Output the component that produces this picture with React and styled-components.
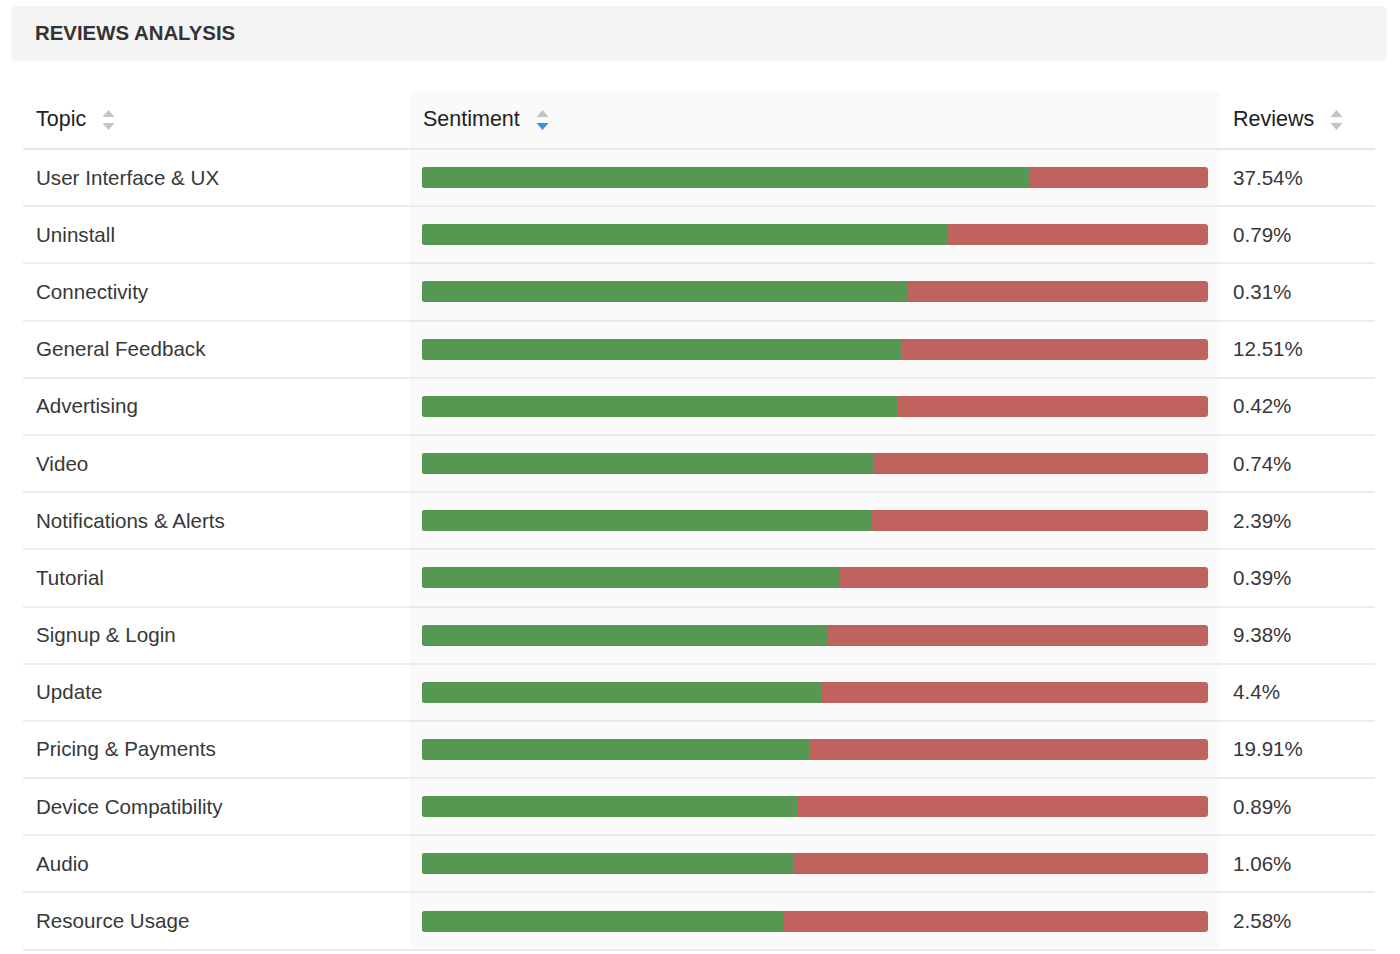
import React from 'react';
import styled, { createGlobalStyle } from 'styled-components';

const GlobalStyle = createGlobalStyle`
  body {
    margin: 0;
    background: #fff;
    font-family: "Liberation Sans", Arial, Helvetica, sans-serif;
    color: #333;
  }
`;

const Page = styled.div`
  padding: 6px 13px 0 11px;
`;

const TitleBar = styled.div`
  background: #f4f4f4;
  border-radius: 6px;
  height: 54px;
  display: flex;
  align-items: center;
  padding: 0 24px;
  box-shadow: 0 1px 2px rgba(0, 0, 0, 0.04);

  h2 {
    margin: 0;
    font-size: 20.4px;
    font-weight: bold;
    color: #333;
  }
`;

const Table = styled.table`
  margin: 31px 0 0 12px;
  width: 1352px;
  border-collapse: collapse;
  table-layout: fixed;
`;

const Th = styled.th`
  text-align: left;
  font-weight: normal;
  font-size: 21.5px;
  color: #222;
  height: 57px;
  padding: 0 13px;
  border-bottom: 2px solid #e8e8e8;
  background: ${({ $active }) => ($active ? '#fafafa' : 'transparent')};
`;

const HeadLabel = styled.span`
  display: inline-flex;
  align-items: center;
  gap: 16px;
`;

const Td = styled.td`
  font-size: 20.6px;
  color: #383838;
  height: 55.2px;
  padding: 0 13px;
  border-bottom: 2px solid #ececec;
  background: ${({ $active }) => ($active ? '#fafafa' : 'transparent')};
`;

const Bar = styled.div`
  display: flex;
  height: 21px;
  border-radius: 3px;
  overflow: hidden;
  background: #c0625e;
  margin: 0 -1px 0 -1px;
`;

const Positive = styled.div`
  background: #559851;
  height: 100%;
`;

const SortIcon = ({ dir }) => (
  <svg width="13" height="22" viewBox="0 0 13 22">
    <path d="M6.5 1 L12.5 8 H0.5 Z" fill={dir === 'asc' ? '#3d8ef0' : '#c4c4c4'} />
    <path d="M6.5 21 L12.5 14 H0.5 Z" fill={dir === 'desc' ? '#3d8ef0' : '#c4c4c4'} />
  </svg>
);

const rows = [
  ['User Interface & UX', 77.4, '37.54%'],
  ['Uninstall', 66.9, '0.79%'],
  ['Connectivity', 61.8, '0.31%'],
  ['General Feedback', 60.9, '12.51%'],
  ['Advertising', 60.4, '0.42%'],
  ['Video', 57.4, '0.74%'],
  ['Notifications & Alerts', 57.1, '2.39%'],
  ['Tutorial', 53.2, '0.39%'],
  ['Signup & Login', 51.7, '9.38%'],
  ['Update', 50.9, '4.4%'],
  ['Pricing & Payments', 49.4, '19.91%'],
  ['Device Compatibility', 47.8, '0.89%'],
  ['Audio', 47.2, '1.06%'],
  ['Resource Usage', 45.9, '2.58%'],
];

export default function App() {
  return (
    <Page>
      <GlobalStyle />
      <TitleBar>
        <h2>REVIEWS ANALYSIS</h2>
      </TitleBar>
      <Table>
        <colgroup>
          <col style={{ width: 387 }} />
          <col style={{ width: 810 }} />
          <col style={{ width: 155 }} />
        </colgroup>
        <thead>
          <tr>
            <Th>
              <HeadLabel>Topic <SortIcon /></HeadLabel>
            </Th>
            <Th $active>
              <HeadLabel>Sentiment <SortIcon dir="desc" /></HeadLabel>
            </Th>
            <Th>
              <HeadLabel>Reviews <SortIcon /></HeadLabel>
            </Th>
          </tr>
        </thead>
        <tbody>
          {rows.map(([topic, pos, share]) => (
            <tr key={topic}>
              <Td>{topic}</Td>
              <Td $active>
                <Bar>
                  <Positive style={{ width: `${pos}%` }} />
                </Bar>
              </Td>
              <Td>{share}</Td>
            </tr>
          ))}
        </tbody>
      </Table>
    </Page>
  );
}
